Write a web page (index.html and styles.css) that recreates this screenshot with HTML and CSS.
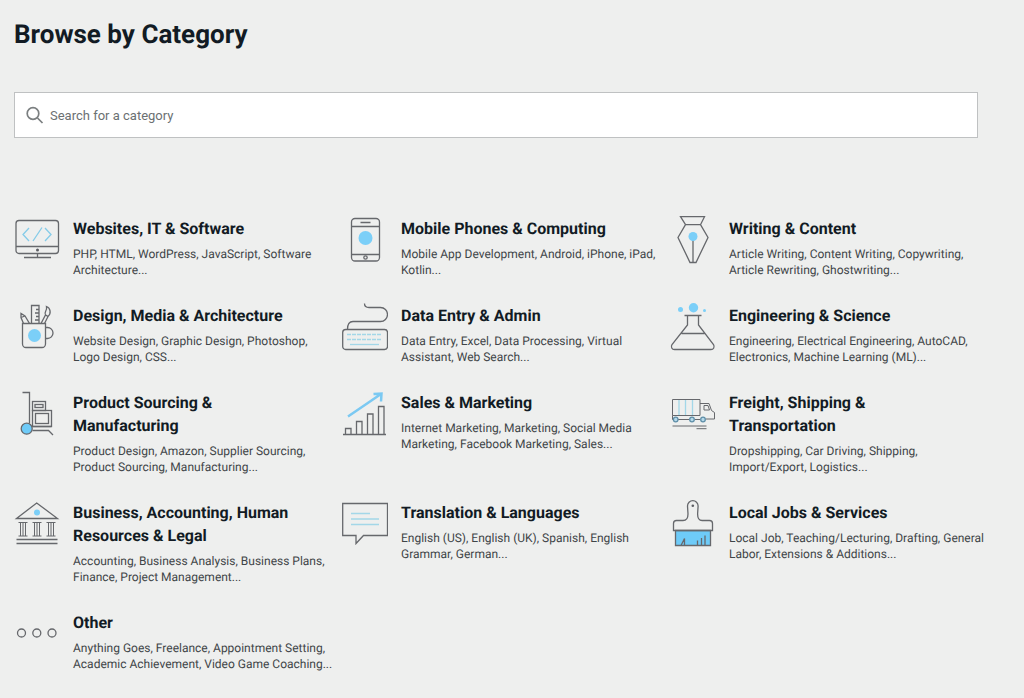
FILE: index.html
```
<!DOCTYPE html>
<html lang="en">
  <head>
    <meta charset="UTF-8" />
    <meta name="viewport" content="width=device-width, initial-scale=1.0" />
    <title>Browse by Category</title>
    <link rel="stylesheet" href="styles.css">
  </head>
  <body>
    <main class="page">
      <h1>Browse by Category</h1>
      <form class="search" role="search">
        <svg class="search-icon" viewBox="0 0 18 18" aria-hidden="true">
          <circle cx="7" cy="7.5" r="5.8" />
          <path d="M11.5 12l5 5" />
        </svg>
        <input type="search" class="search-input" placeholder="Search for a category" aria-label="Search for a category" />
      </form>

      <section class="categories">
        <article class="category">
          <svg class="icon" viewBox="0 0 46 48" aria-hidden="true">
            <rect x="2" y="4.5" width="42.5" height="33" rx="3" />
            <path d="M2 30.5h42.500M23.5 37.5v4M10 41.5h27" />
            <circle class="dark" cx="23.5" cy="34" r="1.5" />
            <path class="blue" d="M15 12l-6 6.5 6 6.5M19 25l9-13.5M31 12l6 6.5-6 6.5" />
          </svg>
          <div class="category-text">
            <h2>Websites, IT &amp; Software</h2>
            <p>PHP, HTML, WordPress, JavaScript, Software Architecture...</p>
          </div>
        </article>

        <article class="category">
          <svg class="icon" viewBox="0 0 46 48" aria-hidden="true">
            <rect x="9.5" y="2.5" width="28" height="42.5" rx="3.5" />
            <path d="M9.5 10.5h28M9.5 38.5h28M18.5 6.5h10" />
            <circle cx="23.5" cy="41.5" r="1.7" />
            <circle class="fill" cx="23.5" cy="22" r="7" />
          </svg>
          <div class="category-text">
            <h2>Mobile Phones &amp; Computing</h2>
            <p>Mobile App Development, Android, iPhone, iPad, Kotlin...</p>
          </div>
        </article>

        <article class="category">
          <svg class="icon" viewBox="0 0 46 48" aria-hidden="true">
            <path d="M10.5 .7h24l-4 8h-15zM15.5 8.7L8 21.5l12 25h6l12-25-7.5-12.8M23 24v22.5" />
            <circle class="fill" cx="23" cy="20.5" r="4.5" />
          </svg>
          <div class="category-text">
            <h2>Writing &amp; Content</h2>
            <p>Article Writing, Content Writing, Copywriting, Article Rewriting, Ghostwriting...</p>
          </div>
        </article>

        <article class="category">
          <svg class="icon" viewBox="0 0 46 48" aria-hidden="true">
            <path d="M8.5 20.5h23V41a3.5 3.5 0 0 1-3.5 3.5H12A3.5 3.5 0 0 1 8.5 41z" />
            <path d="M31.5 24.5h2a5.5 5.5 0 0 1 0 11h-2" />
            <path d="M9.5 20.5l-2.5-6v-4l4 2.5 4.5 7.5M7 14.5l4-1.5M17.5 20.5v-18H25v18M25 6.5h-3M25 10h-4M25 13.5h-3M25 17h-4" />
            <path d="M27 20.5l4.5-8.5 2.5 1.5-3.5 7M31.5 12c-2-3 2-4 1-8.5 4 1.5 5 7 1.5 10" />
            <circle class="fill" cx="20.5" cy="32.5" r="6.5" />
          </svg>
          <div class="category-text">
            <h2>Design, Media &amp; Architecture</h2>
            <p>Website Design, Graphic Design, Photoshop, Logo Design, CSS...</p>
          </div>
        </article>

        <article class="category">
          <svg class="icon" viewBox="0 0 46 48" aria-hidden="true">
            <rect x=".7" y="26.5" width="44.8" height="20" rx="3" />
            <path d="M22.5 .5c0 3 1.5 4 4.5 4h11.5a7 7 0 0 1 0 14H11c-4 0-5.5 3-5.5 8" />
            <path class="pale" d="M5 31.5h34M5 36.5h34" stroke-dasharray="4 1" />
            <path class="pale" d="M8 41.5h29" />
          </svg>
          <div class="category-text">
            <h2>Data Entry &amp; Admin</h2>
            <p>Data Entry, Excel, Data Processing, Virtual Assistant, Web Search...</p>
          </div>
        </article>

        <article class="category">
          <svg class="icon" viewBox="0 0 46 48" aria-hidden="true">
            <path d="M14.5 12.5h17M17.5 12.5v9.5L2 41.5c-1.5 2.5 0 5 2.5 5h36.5c2.5 0 4-2.5 2.5-5L28.5 22v-9.5M11.5 30.5h23" />
            <circle class="fill" cx="10.5" cy="6.5" r="2.5" />
            <circle class="fill" cx="23.5" cy="4.7" r="4.7" />
            <circle class="fill" cx="34.5" cy="7.5" r="1.5" />
          </svg>
          <div class="category-text">
            <h2>Engineering &amp; Science</h2>
            <p>Engineering, Electrical Engineering, AutoCAD, Electronics, Machine Learning (ML)...</p>
          </div>
        </article>

        <article class="category">
          <svg class="icon" viewBox="0 0 46 48" aria-hidden="true">
            <path d="M8.5 2.5h7v31M18.5 40.5h16l4.5 4.5M15.5 36.5h22" />
            <rect x="18.5" y="11.5" width="13" height="9" />
            <rect x="21" y="14.5" width="8" height="3" />
            <rect x="18.5" y="20.5" width="19" height="16" />
            <rect x="21.5" y="23.5" width="13" height="10" />
            <circle class="wheel" cx="12.7" cy="38.7" r="5.5" />
          </svg>
          <div class="category-text">
            <h2>Product Sourcing &amp; Manufacturing</h2>
            <p>Product Design, Amazon, Supplier Sourcing, Product Sourcing, Manufacturing...</p>
          </div>
        </article>

        <article class="category">
          <svg class="icon" viewBox="0 0 46 48" aria-hidden="true">
            <path d="M1 44.5h43M3.5 44.5v-6H9v6M14.5 44.5v-13h5.5v13M25.5 44.5v-20.5H31v20.5M36.5 44.5V16.5H42v28" />
            <path class="arrow" d="M6 26.5L39 4M31.5 4l8-.5-.5 8" />
          </svg>
          <div class="category-text">
            <h2>Sales &amp; Marketing</h2>
            <p>Internet Marketing, Marketing, Social Media Marketing, Facebook Marketing, Sales...</p>
          </div>
        </article>

        <article class="category">
          <svg class="icon" viewBox="0 0 46 48" aria-hidden="true">
            <path class="pale" d="M9 10v15M15.5 10v15M22.5 10v15" />
            <g class="thin">
              <path d="M2.5 9.5h27.5v16H2.5zM30 13.5h9l2.5 7 3 2v6.5h-9M2.5 25.5v4h1M8 29.5h11M25 29.5h5M34 15.5h4l1.5 4.5H34z" />
              <path d="M2.5 36h34M26.5 38.7h10" />
            </g>
            <circle class="tire" cx="5.7" cy="29.5" r="2.3" />
            <circle class="tire" cx="22" cy="29.5" r="2.3" />
            <circle class="tire" cx="33" cy="29.5" r="2.3" />
          </svg>
          <div class="category-text">
            <h2>Freight, Shipping &amp; Transportation</h2>
            <p>Dropshipping, Car Driving, Shipping, Import/Export, Logistics...</p>
          </div>
        </article>

        <article class="category">
          <svg class="icon" viewBox="0 0 46 48" aria-hidden="true">
            <path d="M2.5 18.5L22.7 3l20.8 15.5zM2.5 39.5h41M2.5 43.5h41" />
            <path class="thin" d="M4.5 22.5h9M4.5 36h9M6.5 22.5V36M9 22.5V36M11.5 22.5V36M18.5 22.5h9M18.5 36h9M20.5 22.5V36M23 22.5V36M25.5 22.5V36M32.5 22.5h9M32.5 36h9M34.5 22.5V36M37 22.5V36M39.5 22.5V36" />
            <circle class="fill" cx="23" cy="12.5" r="3" />
          </svg>
          <div class="category-text">
            <h2>Business, Accounting, Human Resources &amp; Legal</h2>
            <p>Accounting, Business Analysis, Business Plans, Finance, Project Management...</p>
          </div>
        </article>

        <article class="category">
          <svg class="icon" viewBox="0 0 46 48" aria-hidden="true">
            <path d="M.7 3.5h44.8v32h-24L14 43.5v-8H.7z" />
            <path class="pale" d="M9 13.5h19M9 19h28M9 24.5h28" />
          </svg>
          <div class="category-text">
            <h2>Translation &amp; Languages</h2>
            <p>English (US), English (UK), Spanish, English Grammar, German...</p>
          </div>
        </article>

        <article class="category">
          <svg class="icon" viewBox="0 0 46 48" aria-hidden="true">
            <path class="wheel" d="M5.5 30.5h35v15h-35z" />
            <path d="M17.5 6a5.3 5.3 0 0 1 10.6 0l-.5 8c0 4 1.5 6.5 4.5 6.5h7.4a3 3 0 0 1 3 3v7h-39v-7a3 3 0 0 1 3-3H13c3.5 0 5-2.5 5-6.5z" />
            <path d="M11 45.5l3.5-7v7M27.5 45.5v-5M31.5 45.5V38M35 45.5V35.5" />
            <circle class="dark" cx="22.8" cy="5.7" r="1.3" />
          </svg>
          <div class="category-text">
            <h2>Local Jobs &amp; Services</h2>
            <p>Local Job, Teaching/Lecturing, Drafting, General Labor, Extensions &amp; Additions...</p>
          </div>
        </article>

        <article class="category">
          <svg class="icon" viewBox="0 0 46 48" aria-hidden="true">
            <circle cx="7.5" cy="23" r="4" />
            <circle cx="22.8" cy="23" r="4" />
            <circle cx="38" cy="23" r="4" />
          </svg>
          <div class="category-text">
            <h2>Other</h2>
            <p>Anything Goes, Freelance, Appointment Setting, Academic Achievement, Video Game Coaching...</p>
          </div>
        </article>
      </section>
    </main>
  </body>
</html>
```

FILE: styles.css
```
* {
  box-sizing: border-box;
}
body {
  background-color: #eeefee;
  color: #121b24;
  font-family: Roboto, "Liberation Sans", sans-serif;
  text-rendering: geometricPrecision;
  margin: 0;
}
.page {
  padding: 19px 34px 24px 14px;
}
h1 {
  margin: 0 0 41px;
  font-size: 26px;
  font-weight: 700;
  line-height: 32px;
}
.search {
  display: flex;
  align-items: center;
  gap: 6px;
  height: 46px;
  margin: 0 12px 78px 0;
  padding: 0 11px;
  background-color: #fff;
  border: 1px solid #bfc1c2;
}
.search-icon {
  flex: none;
  width: 18px;
  height: 18px;
  fill: none;
  stroke: #7b7f80;
  stroke-width: 1.7;
}
.search-input {
  flex: 1;
  min-width: 0;
  padding: 0;
  border: none;
  outline: none;
  background: none;
  color: #121b24;
  font-family: inherit;
  font-size: 13px;
}
.search-input::placeholder {
  color: #6b7072;
}
.categories {
  display: grid;
  grid-template-columns: repeat(3, 1fr);
  gap: 25px 8px;
}
.category {
  display: flex;
  gap: 13px;
}
.category-text {
  flex: 1;
  min-width: 0;
}
h2 {
  margin: 0 0 6px;
  padding: 1px 20px 0 0;
  font-size: 16px;
  font-weight: 700;
  line-height: 23px;
}
p {
  margin: 0;
  color: #3f4548;
  font-size: 12px;
  line-height: 16px;
}
.icon {
  flex: none;
  width: 46px;
  height: 48px;
  fill: none;
  stroke: #66686c;
  stroke-width: 1.3;
}
.icon .blue {
  stroke: #85cbe8;
}
.icon .pale {
  stroke: #a3d7e8;
}
.icon .thin {
  stroke-width: 1;
}
.icon .arrow {
  stroke: #7bc9f2;
  stroke-width: 2.5;
}
.icon .fill {
  fill: #7bcff8;
  stroke: none;
}
.icon .dark {
  fill: #5b5d62;
  stroke: none;
}
.icon .wheel {
  fill: #6ecbf8;
}
.icon .tire {
  fill: #b5d9ea;
  stroke: #5f8fa8;
}
```
